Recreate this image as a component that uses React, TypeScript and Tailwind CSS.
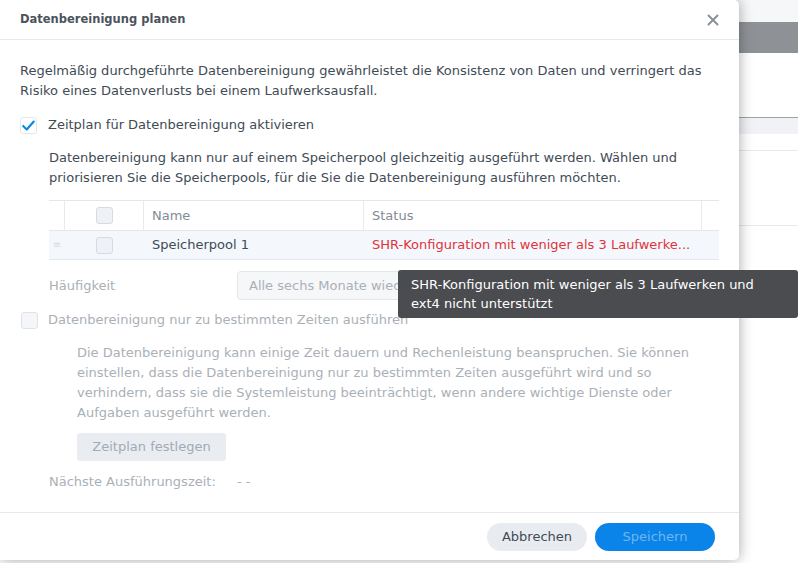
import React from 'react';

const font = { fontFamily: '"DejaVu Sans", Verdana, sans-serif' };

const Check = ({ checked, disabled }: { checked?: boolean; disabled?: boolean }) => (
  <span
    className={`flex h-[17px] w-[17px] shrink-0 items-center justify-center rounded-[3px] ${
      checked ? 'border border-[#e3e7ec] bg-white' : disabled ? 'border border-[#dfe3e8] bg-[#f4f6f9]' : 'border border-[#d6dbe1] bg-[#eef1f5]'
    }`}
  >
    {checked && (
      <svg width="15" height="15" viewBox="0 0 17 17">
        <path d="M2.5 9 L6.5 13 L14.5 4" fill="none" stroke="#0a87e6" strokeWidth="2.4" strokeLinecap="round" strokeLinejoin="round" />
      </svg>
    )}
  </span>
);

export default function App() {
  return (
    <div className="relative h-[563px] w-[798px] overflow-hidden bg-white text-[13px]" style={font}>
      {/* desktop behind */}
      <div className="flex flex-col">
        <div className="h-[22px] bg-[#f6f7f9]" />
        <div className="h-[31px] bg-[#8e9297]" />
        <div className="h-[64px] bg-white" />
        <div className="h-[1px] bg-[#9ea1a5]" />
        <div className="h-[16px] bg-[#f1f2f6]" />
        <div className="h-[16px] bg-white" />
        <div className="h-[1px] bg-[#e8e9eb]" />
        <div className="h-[74px] bg-white" />
        <div className="h-[1px] bg-[#e8e9eb]" />
      </div>

      {/* dialog */}
      <div className="absolute left-0 top-0 flex h-[560px] w-[739px] flex-col rounded-br-[5px] rounded-tr-[5px] bg-white shadow-[0_0_14px_rgba(0,0,0,0.35)]">
        <div className="flex h-[40px] shrink-0 items-center justify-between border-b border-[#e6e9ed] pl-[20px] pr-[20px]">
          <span className="text-[11.5px] font-bold text-[#4b535c]">Datenbereinigung planen</span>
          <svg width="12" height="12" viewBox="0 0 12 12">
            <path d="M1.5 1.5 L10.5 10.5 M10.5 1.5 L1.5 10.5" stroke="#8a9099" strokeWidth="2" strokeLinecap="round" />
          </svg>
        </div>

        <div className="flex flex-1 flex-col px-[20px] pt-[21px] leading-[20px] text-[#414b55]">
          <p>
            Regelmäßig durchgeführte Datenbereinigung gewährleistet die Konsistenz von Daten und verringert das Risiko
            eines Datenverlusts bei einem Laufwerksausfall.
          </p>

          <label className="mt-[14px] flex items-center gap-[11px]">
            <Check checked />
            <span>Zeitplan für Datenbereinigung aktivieren</span>
          </label>

          <div className="pl-[29px]">
            <p className="mt-[13px]">
              Datenbereinigung kann nur auf einem Speicherpool gleichzeitig ausgeführt werden. Wählen und priorisieren Sie
              die Speicherpools, für die Sie die Datenbereinigung ausführen möchten.
            </p>

            <div className="mt-[12px] w-[670px] border-t border-[#e3e6ea]">
              <div className="flex h-[30px] items-center border-b border-[#e3e6ea] text-[#838b94]">
                <div className="h-full w-[16px] border-r border-[#e8ebee]" />
                <div className="flex h-full w-[79px] items-center justify-center border-r border-[#e8ebee]">
                  <Check />
                </div>
                <div className="flex h-full w-[220px] items-center border-r border-[#e8ebee] pl-[8px]">Name</div>
                <div className="flex h-full w-[338px] items-center border-r border-[#e8ebee] pl-[8px]">Status</div>
                <div className="flex-1" />
              </div>
              <div className="flex h-[29px] items-center border-b border-[#e3e6ea] bg-[#f4f8fd]">
                <div className="flex w-[16px] items-center justify-center text-[10px] text-[#d8dde3]">≡</div>
                <div className="flex w-[79px] items-center justify-center">
                  <Check />
                </div>
                <div className="w-[220px] pl-[8px] text-[#414b55]">Speicherpool 1</div>
                <div className="w-[338px] whitespace-nowrap pl-[8px] text-[#e0343a]">SHR-Konfiguration mit weniger als 3 Laufwerke...</div>
              </div>
            </div>

            <div className="mt-[11px] flex items-center text-[#aab0b7]">
              <span className="w-[188px]">Häufigkeit</span>
              <div className="flex h-[29px] w-[260px] items-center rounded-[4px] border border-[#e3e6ea] bg-[#f6f7f9] pl-[11px]">
                Alle sechs Monate wiederholen
              </div>
            </div>
          </div>

          <label className="mt-[10px] flex items-center gap-[10px] pl-[1px] text-[#aab0b7]">
            <Check disabled />
            <span>Datenbereinigung nur zu bestimmten Zeiten ausführen</span>
          </label>

          <div className="pl-[57px] text-[#aab0b7]">
            <p className="mt-[13px]">
              Die Datenbereinigung kann einige Zeit dauern und Rechenleistung beanspruchen. Sie können einstellen, dass
              die Datenbereinigung nur zu bestimmten Zeiten ausgeführt wird und so verhindern, dass sie die
              Systemleistung beeinträchtigt, wenn andere wichtige Dienste oder Aufgaben ausgeführt werden.
            </p>
            <button className="mt-[10px] h-[28px] w-[149px] rounded-[3px] bg-[#e9edf2] text-[#a3aab2]">
              Zeitplan festlegen
            </button>
          </div>

          <div className="mt-[11px] flex pl-[29px] text-[#aab0b7]">
            <span className="w-[188px]">Nächste Ausführungszeit:</span>
            <span>- -</span>
          </div>
        </div>

        <div className="flex h-[48px] shrink-0 items-center justify-end gap-[8px] border-t border-[#e6e9ed] pr-[24px]">
          <button className="h-[28px] w-[100px] rounded-full bg-[#e8ecf1] text-[#414b55]">Abbrechen</button>
          <button className="h-[28px] w-[120px] rounded-full bg-[#0a84e8] text-[#6fb5f1]">Speichern</button>
        </div>
      </div>

      {/* tooltip */}
      <div className="absolute left-[398px] top-[270px] w-[400px] rounded-[3px] bg-[#4a4c4f] px-[13px] py-[5px] leading-[19px] text-white">
        SHR-Konfiguration mit weniger als 3 Laufwerken und
        <br />
        ext4 nicht unterstützt
      </div>
    </div>
  );
}
